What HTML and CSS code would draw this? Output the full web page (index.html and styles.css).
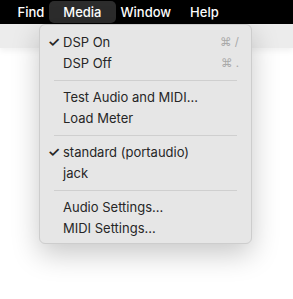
FILE: index.html
```html
<!DOCTYPE html>
<html lang="en">
<head>
    <meta charset="UTF-8">
    <title>Media menu</title>
    <link rel="stylesheet" href="styles.css">
</head>
<body>
    <div class="barra-menu">
        <span class="item-menu">Find</span>
        <span class="item-menu ativo">Media</span>
        <span class="item-menu">Window</span>
        <span class="item-menu">Help</span>
    </div>
    <div class="barra-janela"></div>

    <div class="menu-suspenso">
        <div class="opcao"><span class="marca">✓</span><span class="rotulo">DSP On</span><span class="atalho">⌘ /</span></div>
        <div class="opcao"><span class="marca"></span><span class="rotulo">DSP Off</span><span class="atalho">⌘ .</span></div>
        <div class="separador"></div>
        <div class="opcao"><span class="marca"></span><span class="rotulo">Test Audio and MIDI...</span></div>
        <div class="opcao"><span class="marca"></span><span class="rotulo">Load Meter</span></div>
        <div class="separador"></div>
        <div class="opcao"><span class="marca">✓</span><span class="rotulo">standard (portaudio)</span></div>
        <div class="opcao"><span class="marca"></span><span class="rotulo">jack</span></div>
        <div class="separador"></div>
        <div class="opcao"><span class="marca"></span><span class="rotulo">Audio Settings...</span></div>
        <div class="opcao"><span class="marca"></span><span class="rotulo">MIDI Settings...</span></div>
    </div>
</body>
</html>
```

FILE: styles.css
```css
* {
    box-sizing: border-box;
    margin: 0;
    padding: 0;
    font-family: 'Inter', 'Liberation Sans', sans-serif;
}

body {
    background-color: #fff;
    color: #262626;
    height: 299px;
    overflow: hidden;
    position: relative;
}

.barra-menu {
    display: flex;
    align-items: center;
    height: 24px;
    padding-left: 8px;
    background-color: #000;
}

.item-menu {
    color: #fff;
    font-size: 13px;
    font-weight: 500;
    padding: 0 9.5px;
    line-height: 22px;
}

.item-menu.ativo {
    background-color: #2c2c2c;
    border-radius: 5px;
    padding: 0 14.5px;
    margin: 0 -5px;
}

.barra-janela {
    height: 24px;
    background-color: #ececec;
    box-shadow: 0 3px 6px rgba(0, 0, 0, 0.06);
}

.menu-suspenso {
    position: absolute;
    top: 24px;
    left: 39px;
    width: 213px;
    padding: 6px 0 4px 0;
    background-color: #e6e6e6;
    border: 1px solid #cdcdcd;
    border-radius: 6px;
    box-shadow: 0 10px 28px rgba(0, 0, 0, 0.22);
}

.opcao {
    display: flex;
    align-items: center;
    height: 21.5px;
    font-size: 13px;
    padding-right: 12px;
}

.marca {
    width: 23px;
    text-align: right;
    padding-right: 3px;
    font-size: 14px;
    font-weight: 600;
}

.rotulo {
    flex: 1;
}

.atalho {
    color: #a9a9a9;
    font-size: 11.5px;
}

.separador {
    height: 1px;
    margin: 5.5px 14px;
    background-color: #cfcfcf;
}
```
